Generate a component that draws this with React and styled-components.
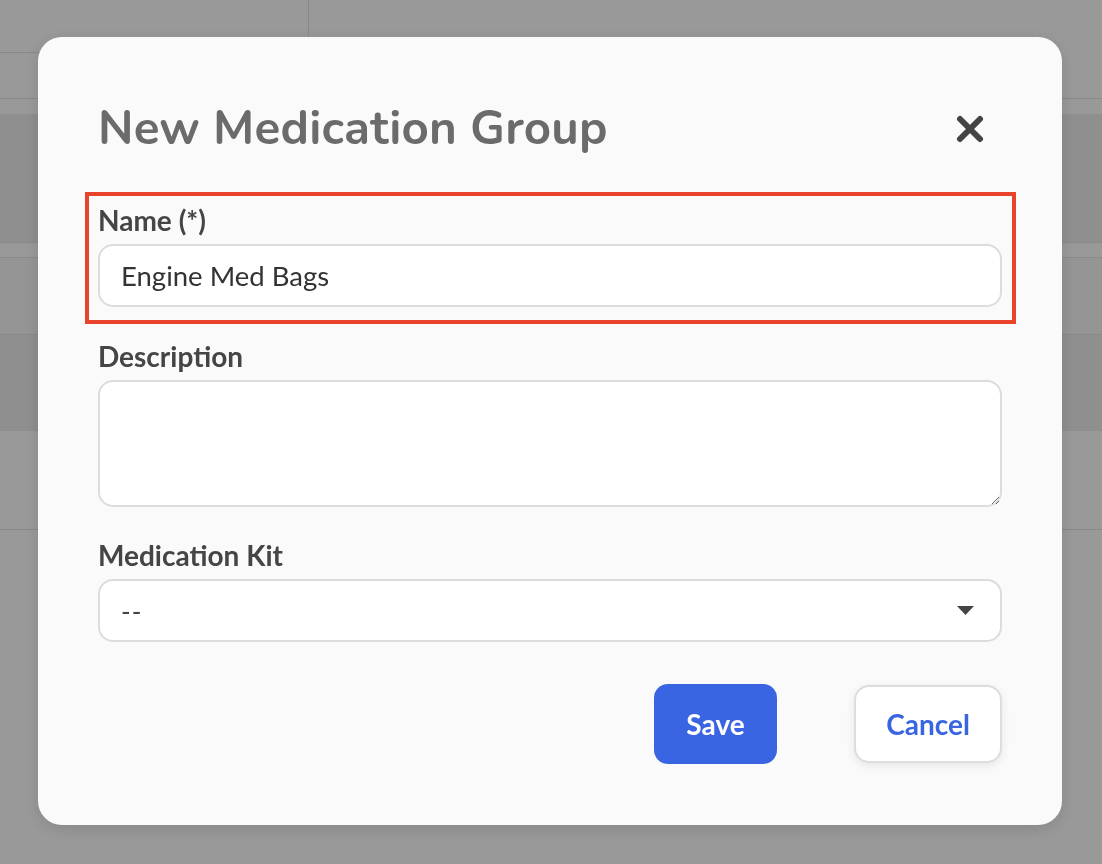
import React from "react";
import styled, { createGlobalStyle } from "styled-components";

const GlobalStyle = createGlobalStyle`
  html, body {
    margin: 0;
    padding: 0;
    background: #ffffff;
    font-family: "Lato", "Liberation Sans", sans-serif;
  }
  * {
    box-sizing: border-box;
  }
`;

const backRows = [
  { height: 15, tone: "#ffffff" },
  { height: 128, tone: "#eeeeee" },
  { height: 15, tone: "#ffffff", line: true },
  { height: 77, tone: "#f8f8f8", line: true },
  { height: 97, tone: "#eeeeee", line: true },
  { height: 98, tone: "#ffffff" },
  { height: 336, tone: "#ffffff", line: true },
];

const App = () => {
  return (
    <>
      <GlobalStyle />
      <Page>
        <TopBar>
          <SideHead>
            <SideTitle />
            <SideSub />
          </SideHead>
          <MainHead />
        </TopBar>
        {backRows.map((row, i) => (
          <BackRow key={i} $tone={row.tone} $line={row.line} style={{ height: row.height }} />
        ))}
      </Page>

      <Backdrop>
        <Modal>
          <Header>
            <Title>New Medication Group</Title>
            <CloseButton aria-label="Close">
              <svg width="28" height="28" viewBox="0 0 28 28">
                <path
                  d="M4 4 L24 24 M24 4 L4 24"
                  stroke="#444444"
                  strokeWidth="6"
                  strokeLinecap="round"
                />
              </svg>
            </CloseButton>
          </Header>

          <Highlight>
            <Label>Name (*)</Label>
            <Input defaultValue="Engine Med Bags" />
          </Highlight>

          <Field $top={16}>
            <Label>Description</Label>
            <TextArea />
          </Field>

          <Field $top={32}>
            <Label>Medication Kit</Label>
            <SelectBox>
              <SelectValue>--</SelectValue>
              <svg width="17" height="9" viewBox="0 0 17 9">
                <path d="M0 0 H17 L8.5 9 Z" fill="#444444" />
              </svg>
            </SelectBox>
          </Field>

          <Actions>
            <SaveButton>Save</SaveButton>
            <CancelButton>Cancel</CancelButton>
          </Actions>
        </Modal>
      </Backdrop>
    </>
  );
};

const Page = styled.div`
  width: 100%;
  height: 864px;
  overflow: hidden;
  background: #ffffff;
`;

const TopBar = styled.div`
  display: flex;
  height: 99px;
  border-bottom: 1px solid #e4e4e4;
`;

const SideHead = styled.div`
  width: 309px;
  border-right: 1px solid #e4e4e4;
  display: flex;
  flex-direction: column;
`;

const SideTitle = styled.div`
  height: 53px;
  border-bottom: 1px solid #e4e4e4;
`;

const SideSub = styled.div`
  flex: 1;
`;

const MainHead = styled.div`
  flex: 1;
`;

const BackRow = styled.div`
  background: ${(p) => p.$tone};
  border-top: ${(p) => (p.$line ? "1px solid #e4e4e4" : "none")};
`;

const Backdrop = styled.div`
  position: fixed;
  inset: 0;
  background: rgba(0, 0, 0, 0.4);
  display: flex;
  align-items: flex-start;
  justify-content: flex-start;
  padding: 37px 0 0 38px;
`;

const Modal = styled.div`
  width: 1024px;
  height: 788px;
  background: #fafafa;
  border-radius: 24px;
  box-shadow: 0 4px 18px rgba(0, 0, 0, 0.12);
  padding: 61px 60px 60px 60px;
  display: flex;
  flex-direction: column;
`;

const Header = styled.div`
  display: flex;
  align-items: center;
  justify-content: space-between;
  height: 56px;
`;

const Title = styled.h1`
  margin: 0;
  font-family: "Nunito", "Lato", "Liberation Sans", sans-serif;
  font-weight: 700;
  font-size: 47.5px;
  line-height: 56px;
  color: #6b6b6b;
  letter-spacing: 0.2px;
  position: relative;
  top: 3px;
`;

const CloseButton = styled.button`
  border: none;
  background: none;
  padding: 0;
  width: 28px;
  height: 28px;
  margin: 6px 18px 0 0;
  display: flex;
  cursor: pointer;
`;

const Highlight = styled.div`
  margin: 38px -14px 0 -13px;
  border: 4px solid #e8432b;
  padding: 8px 10px 13px 9px;
  display: flex;
  flex-direction: column;
`;

const Field = styled.div`
  margin-top: ${(p) => p.$top}px;
  display: flex;
  flex-direction: column;
`;

const Label = styled.label`
  font-weight: 700;
  font-size: 28px;
  line-height: 32px;
  color: #454545;
  margin-bottom: 8px;
`;

const controlBase = `
  width: 100%;
  background: #ffffff;
  border: 2px solid #dcdcdc;
  border-radius: 15px;
  font-family: "Lato", "Liberation Sans", sans-serif;
  font-size: 27.5px;
  color: #333333;
  outline: none;
`;

const Input = styled.input`
  ${controlBase}
  height: 63px;
  padding: 0 21px;
`;

const TextArea = styled.textarea`
  ${controlBase}
  height: 127px;
  padding: 14px 21px;
  resize: vertical;
  display: block;
`;

const SelectBox = styled.div`
  ${controlBase}
  height: 63px;
  padding: 0 26px 0 21px;
  display: flex;
  align-items: center;
  justify-content: space-between;
`;

const SelectValue = styled.span`
  font-size: 26px;
  color: #444444;
  letter-spacing: 1px;
`;

const Actions = styled.div`
  margin-top: 42px;
  display: flex;
  justify-content: flex-end;
  align-items: flex-start;
  gap: 77px;
`;

const buttonBase = `
  font-family: "Lato", "Liberation Sans", sans-serif;
  font-weight: 700;
  font-size: 28px;
  cursor: pointer;
  display: flex;
  align-items: center;
  justify-content: center;
`;

const SaveButton = styled.button`
  ${buttonBase}
  width: 123px;
  height: 80px;
  border: none;
  border-radius: 14px;
  background: #3a65e2;
  color: #ffffff;
`;

const CancelButton = styled.button`
  ${buttonBase}
  width: 148px;
  height: 78px;
  margin-top: 1px;
  border: 2px solid #dddddd;
  border-radius: 15px;
  background: #ffffff;
  color: #3a65e2;
  box-shadow: 0 3px 10px rgba(0, 0, 0, 0.08);
`;

export default App;
